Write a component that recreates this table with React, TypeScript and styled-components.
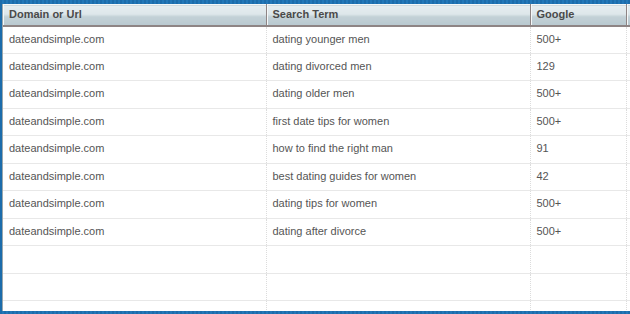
import React from 'react';
import styled, { createGlobalStyle } from 'styled-components';

const GlobalStyle = createGlobalStyle`
  html, body {
    margin: 0;
    padding: 0;
    width: 630px;
    height: 314px;
    overflow: hidden;
    background: #1c6cab;
  }
`;

const Frame = styled.div`
  box-sizing: border-box;
  width: 630px;
  height: 314px;
  padding: 4px 0 3px 2px;
  background: repeating-linear-gradient(90deg, #1c6cab 0 2px, #2277b8 2px 4px);
`;

const Panel = styled.div`
  height: 100%;
  overflow: hidden;
  background: #fff;
  border-left: 1px solid #9aa7ad;
`;

const Grid = styled.table`
  border-collapse: collapse;
  table-layout: fixed;
  width: 700px;
  font-family: 'Liberation Sans', Arial, sans-serif;
  font-size: 11px;
`;

const HeadCell = styled.th<{ $w: number }>`
  width: ${(p) => p.$w}px;
  height: 21px;
  padding: 0 6px 1px;
  box-sizing: border-box;
  text-align: left;
  font-weight: bold;
  color: #4a4a4a;
  background: linear-gradient(#e6edf0 0%, #dde6ea 45%, #c3d1d7 55%, #b9c9d0 100%);
  border-top: 1px solid #f4f7f8;
  border-bottom: 2px solid #8e8585;
  border-right: 1px solid #8e8585;
  box-shadow: inset 1px 0 0 #f4f7f8;
  white-space: nowrap;
`;

const Row = styled.tr`
  height: 27.5px;
`;

const Cell = styled.td`
  padding: 0 6px 2px;
  color: #555;
  border-bottom: 1px solid #e8e8e8;
  border-right: 1px dotted #dcdcdc;
  white-space: nowrap;
  overflow: hidden;
`;

const rows: [string, string, string][] = [
  ['dateandsimple.com', 'dating younger men', '500+'],
  ['dateandsimple.com', 'dating divorced men', '129'],
  ['dateandsimple.com', 'dating older men', '500+'],
  ['dateandsimple.com', 'first date tips for women', '500+'],
  ['dateandsimple.com', 'how to find the right man', '91'],
  ['dateandsimple.com', 'best dating guides for women', '42'],
  ['dateandsimple.com', 'dating tips for women', '500+'],
  ['dateandsimple.com', 'dating after divorce', '500+'],
  ['', '', ''],
  ['', '', ''],
  ['', '', ''],
  ['', '', ''],
];

export default function App() {
  return (
    <>
      <GlobalStyle />
      <Frame>
        <Panel>
          <Grid>
            <thead>
              <tr>
                <HeadCell $w={263}>Domain or Url</HeadCell>
                <HeadCell $w={264}>Search Term</HeadCell>
                <HeadCell $w={96}>Google</HeadCell>
                <HeadCell $w={77}></HeadCell>
              </tr>
            </thead>
            <tbody>
              {rows.map((r, i) => (
                <Row key={i}>
                  <Cell>{r[0]}</Cell>
                  <Cell>{r[1]}</Cell>
                  <Cell>{r[2]}</Cell>
                  <Cell></Cell>
                </Row>
              ))}
            </tbody>
          </Grid>
        </Panel>
      </Frame>
    </>
  );
}
